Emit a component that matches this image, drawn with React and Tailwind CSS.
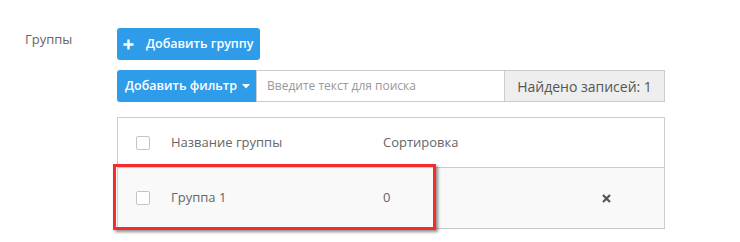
import React from 'react';

const Checkbox = () => (
  <span className="block w-[14px] h-[14px] border border-[#c4c4c4] rounded-[2px] bg-white" />
);

const App = () => {
  return (
    <div className="w-[740px] h-[242px] bg-white relative font-['Open_Sans',sans-serif] text-[13px] text-[#666]">
      <div className="flex pt-[28px]">
        {/* Label column */}
        <div className="w-[117px] pl-[25px] pt-[2px] leading-[18px] text-[13px] text-[#666]">Группы</div>

        {/* Content column */}
        <div className="w-[548px] flex flex-col">
          <button className="w-[143px] h-[32px] bg-[#2e9ce8] rounded-[3px] text-white font-semibold text-[12.5px] flex items-center pl-[6px]">
            <svg width="11" height="11" viewBox="0 0 11 11" className="mr-[12px]">
              <path d="M5.5 0.5v10M0.5 5.5h10" stroke="white" strokeWidth="2.4" />
            </svg>
            Добавить группу
          </button>

          <div className="flex mt-[10px] h-[32px]">
            <button className="w-[139px] h-[32px] bg-[#2e9ce8] rounded-l-[3px] text-white font-semibold text-[12.5px] flex items-center justify-center gap-[5px] pl-[2px]">
              Добавить фильтр
              <svg width="8" height="5" viewBox="0 0 8 5">
                <path d="M0 0h8L4 4.5z" fill="white" />
              </svg>
            </button>
            <div className="w-[249px] border border-[#ccc] flex items-center pl-[10px] text-[12px] text-[#999]">
              Введите текст для поиска
            </div>
            <div className="flex-1 border border-l-0 border-[#ccc] bg-[#eee] flex items-center justify-center text-[14px] text-[#555]">
              Найдено записей: 1
            </div>
          </div>

          <div className="mt-[15px] border border-[#ccc] border-b-[#c8c8c8]">
            <div className="flex items-center h-[50px] bg-white border-b border-[#ccc]">
              <div className="w-[53px] pl-[18px]"><Checkbox /></div>
              <div className="w-[212px]">Название группы</div>
              <div className="flex-1">Сортировка</div>
            </div>
            <div className="flex items-center h-[60px] bg-[#f9f9f9]">
              <div className="w-[53px] pl-[18px]"><Checkbox /></div>
              <div className="w-[212px]">Группа 1</div>
              <div className="w-[219px]">0</div>
              <svg width="9" height="9" viewBox="0 0 9 9">
                <path d="M1 1l7 7M8 1l-7 7" stroke="#555" strokeWidth="2.2" />
              </svg>
            </div>
          </div>
        </div>
      </div>

      {/* Annotation highlight */}
      <div className="absolute left-[113px] top-[164px] w-[323px] h-[66px] border-[3px] border-[#f62b2b] shadow-[2px_2px_3px_rgba(0,0,0,0.45)]" />
    </div>
  );
};

export default App;
